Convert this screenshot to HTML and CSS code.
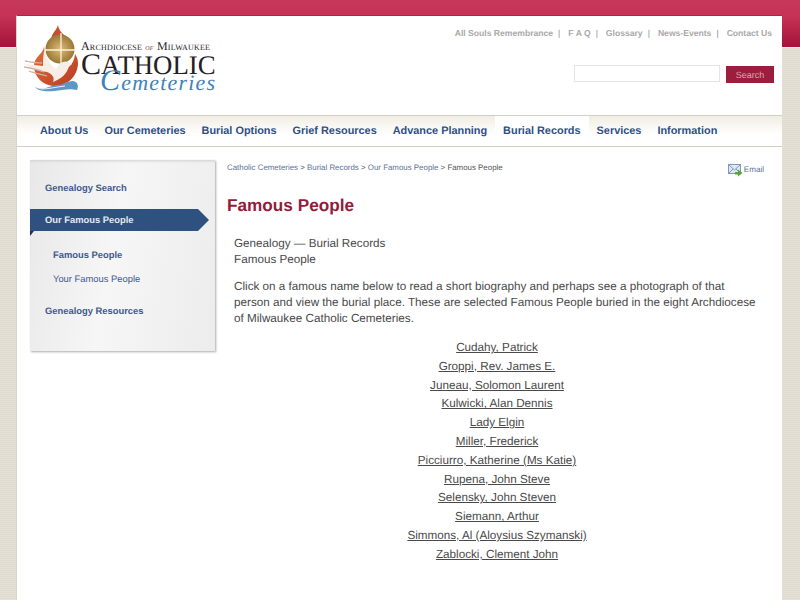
FILE: index.html
```html
<!DOCTYPE html>
<html lang="en">
<head>
<meta charset="utf-8">
<title>Famous People</title>
<link rel="stylesheet" href="styles.css">
</head>
<body>
<div class="band"></div>
<div class="page">
  <header class="header">
    <a class="logo" href="#">
      <svg class="mark" width="58" height="70" viewBox="0 0 58 70">
        <defs>
          <radialGradient id="sun" cx="50%" cy="50%" r="55%"><stop offset="0" stop-color="#dcbb78"/><stop offset="1" stop-color="#94702f"/></radialGradient>
          <linearGradient id="fl" x1="0" y1="0" x2="1" y2="1"><stop offset="0" stop-color="#e0703a"/><stop offset="1" stop-color="#b93a22"/></linearGradient>
        </defs>
        <path d="M35 1C36 8 41 10 45 15L29 18C26 11 33 8 35 1Z" fill="#c2502f"/>
        <path d="M21 22C21 30 11 32 11 42C11 54 21 61 30 62C44 63 55 52 55 39C55 36 54 33 52 30C51 42 42 48 34 46C26 44 22 32 21 22Z" fill="url(#fl)"/>
        <circle cx="37" cy="25" r="14.500" fill="url(#sun)"/>
        <path d="M38 9V41M22 26H53" stroke="#fbf3dd" stroke-width="1.300"/>
        <path d="M22 24C23 34 27 42 33 45C36 39 41 36 45 38L49 40L46 42C44 50 38 55 30 58C32 53 29 50 24 48C16 47 8 44 1 40C8 41 14 41 20 42C20 36 20 30 22 24Z" fill="#f8eee7"/>
        <path d="M2 37C8 38 13 39 19 39M1 43C8 44 14 45 21 48M6 47C11 49 17 50 24 52" stroke="#cfb3a5" stroke-width="1.300" fill="none"/>
        <path d="M12 63C20 68 27 61 34 61C40 61 43 57 50 57C55 58 56 62 54 66C47 64 39 66 31 67C23 68 15 67 12 63Z" fill="#5d97c4"/>
        <path d="M18 65C26 65 33 63 42 62" stroke="#eaf3f8" stroke-width="1" fill="none"/>
      </svg>
      <div class="logo-text">
        <div class="logo-top">Archdiocese <i>of</i> Milwaukee</div>
        <div class="logo-main"><span class="cap">C</span>ATHOLIC</div>
        <div class="logo-script"><span class="script-cap">C</span>emeteries</div>
      </div>
    </a>
    <div class="tools">
      <nav class="utility">
        <a href="#">All Souls Remembrance</a><span>|</span>
        <a href="#">F A Q</a><span>|</span>
        <a href="#">Glossary</a><span>|</span>
        <a href="#">News-Events</a><span>|</span>
        <a href="#">Contact Us</a>
      </nav>
      <form class="search">
        <input class="search-input" type="text" aria-label="Search">
        <button class="search-btn" type="button">Search</button>
      </form>
    </div>
  </header>
  <nav class="mainnav">
    <a href="#">About Us</a>
    <a href="#">Our Cemeteries</a>
    <a href="#">Burial Options</a>
    <a href="#">Grief Resources</a>
    <a href="#">Advance Planning</a>
    <a class="current" href="#">Burial Records</a>
    <a href="#">Services</a>
    <a href="#">Information</a>
  </nav>
  <div class="body">
    <aside class="side">
      <a class="side-item" href="#">Genealogy Search</a>
      <a class="side-active" href="#">Our Famous People</a>
      <a class="side-sub strong" href="#">Famous People</a>
      <a class="side-sub" href="#">Your Famous People</a>
      <a class="side-item last" href="#">Genealogy Resources</a>
    </aside>
    <main class="main">
      <div class="topline">
        <div class="crumbs"><a href="#">Catholic Cemeteries</a> &gt; <a href="#">Burial Records</a> &gt; <a href="#">Our Famous People</a> &gt; Famous People</div>
        <a class="email" href="#">
          <svg width="15" height="13" viewBox="0 0 15 13"><rect x="0.500" y="0.500" width="12" height="9" fill="#dfe8f2" stroke="#7f9ab8"/><path d="M1 1L6.500 6L12 1M1 9L5 5M12 9L8 5" stroke="#7f9ab8" fill="none"/><path d="M7 8H10V5.500L14.500 9L10 12.500V10.500H7Z" fill="#5da53a"/></svg>
          <span>Email</span>
        </a>
      </div>
      <h1 class="title">Famous People</h1>
      <div class="copy">
        <p class="lead">Genealogy — Burial Records<br>Famous People</p>
        <p>Click on a famous name below to read a short biography and perhaps see a photograph of that person and view the burial place. These are selected Famous People buried in the eight Archdiocese of Milwaukee Catholic Cemeteries.</p>
        <ul class="names">
          <li><a href="#">Cudahy, Patrick</a></li>
          <li><a href="#">Groppi, Rev. James E.</a></li>
          <li><a href="#">Juneau, Solomon Laurent</a></li>
          <li><a href="#">Kulwicki, Alan Dennis</a></li>
          <li><a href="#">Lady Elgin</a></li>
          <li><a href="#">Miller, Frederick</a></li>
          <li><a href="#">Picciurro, Katherine (Ms Katie)</a></li>
          <li><a href="#">Rupena, John Steve</a></li>
          <li><a href="#">Selensky, John Steven</a></li>
          <li><a href="#">Siemann, Arthur</a></li>
          <li><a href="#">Simmons, Al (Aloysius Szymanski)</a></li>
          <li><a href="#">Zablocki, Clement John</a></li>
        </ul>
      </div>
    </main>
  </div>
</div>
</body>
</html>
```
FILE: styles.css
```css
* { box-sizing: border-box; }
html, body { margin: 0; height: 100%; overflow: hidden; }
body {
  position: relative;
  background: repeating-linear-gradient(0deg, #e5e0d6 0 1px, #e1dcd1 1px 2px);
  font-family: "Liberation Sans", Arial, sans-serif;
  color: #4a4a4a;
  text-rendering: geometricPrecision;
}
a { color: inherit; text-decoration: none; }
.band {
  position: absolute;
  top: 0; left: 0; right: 0;
  height: 48px;
  background: linear-gradient(#c7385b 0, #c43355 16px, #a5123a 47px);
  border-bottom: 1px solid #f1ece4;
}
.page {
  position: relative;
  width: 766px;
  height: 585px;
  margin: 15px 0 0 16px;
  background: #fff;
  border-top: 1px solid #b8203f;
  border-left: 1px solid #d9d4ca;
}
.header {
  display: flex;
  justify-content: space-between;
  height: 99px;
}
.logo { display: flex; padding: 8px 0 0 6px; }
.mark { flex: none; }
.logo-text { position: relative; width: 140px; padding-top: 17px; font-family: "Liberation Serif", serif; color: #26211f; }
.logo-top { font-size: 12px; font-variant: small-caps; white-space: nowrap; line-height: 11px; letter-spacing: 0.200px; }
.logo-top i { font-size: 9px; color: #7a3b34; }
.logo-main { font-size: 26.800px; line-height: 24px; white-space: nowrap; }
.cap { font-size: 30px; line-height: 24px; }
.logo-script { position: absolute; left: 19px; top: 47px; font-size: 22px; line-height: 24px; font-style: italic; color: #3f82b8; white-space: nowrap; letter-spacing: 1.200px; }
.script-cap { font-size: 30px; line-height: 20px; }
.tools { display: flex; flex-direction: column; align-items: flex-end; padding: 11px 8px 0 0; }
.utility { display: flex; font-size: 8.600px; font-weight: bold; color: #a9a9a9; line-height: 12px; padding-right: 2px; white-space: nowrap; }
.utility span { margin: 0 8px 0 5px; font-weight: normal; color: #8a8a8a; }
.search { display: flex; gap: 6px; margin-top: 26px; }
.search-input { width: 146px; height: 17px; border: 1px solid #e4e4e4; background: #fff; padding: 0; }
.search-btn { width: 48px; height: 17px; margin-top: 1px; border: 0; padding: 0; background: #9c1d3d; color: #d9a9b5; font: 9px "Liberation Sans", Arial, sans-serif; text-rendering: geometricPrecision; }
.mainnav {
  display: flex;
  height: 32px;
  padding-left: 15px;
  border-top: 1px solid #d2cec6;
  border-bottom: 1px solid #d2cec6;
  background: linear-gradient(#f1ede4, #fff 18px);
  font-size: 10.900px;
  font-weight: bold;
  color: #2d4f86;
  white-space: nowrap;
}
.mainnav a { padding: 0 8px; line-height: 31px; }
.mainnav .current { background: #fff; }
.body { display: flex; padding-top: 13px; }
.side {
  flex: none;
  display: flex;
  flex-direction: column;
  width: 185px;
  height: 191px;
  margin-left: 13px;
  padding-top: 22px;
  background: linear-gradient(100deg, #e8e8e8, #f6f6f6 45%, #ececec);
  box-shadow: 1px 1px 2px #aaa, inset 0 3px 3px -2px #d0d0d0;
  font-size: 9.400px;
  font-weight: bold;
  color: #3d5a8c;
}
.side-item { padding-left: 15px; line-height: 12px; }
.side-item.last { margin-top: 20px; }
.side-active {
  position: relative;
  width: 168px;
  height: 22px;
  margin-top: 15px;
  padding-left: 15px;
  line-height: 22px;
  color: #e4e8ef;
  background: #2f5180;
}
.side-active::before {
  content: "";
  position: absolute;
  left: 100%;
  top: 0;
  border-left: 11px solid #2f5180;
  border-top: 11px solid transparent;
  border-bottom: 11px solid transparent;
}
.side-active::after {
  content: "";
  position: absolute;
  left: 0;
  top: 100%;
  border-top: 5px solid #1d3357;
  border-left: 4px solid transparent;
  transform: scaleX(-1);
}
.side-sub { padding-left: 23px; line-height: 12px; margin-top: 12px; font-weight: normal; }
.side-active + .side-sub { margin-top: 18px; }
.side-sub.strong { font-weight: bold; }
.main { flex: 1; min-width: 0; padding: 0 18px 0 12px; }
.topline { display: flex; justify-content: space-between; padding-top: 2px; height: 20px; }
.crumbs { font-size: 7.900px; line-height: 12px; color: #555; }
.crumbs a { color: #5b7399; }
.email { display: flex; align-items: flex-start; gap: 1px; font-size: 8.100px; line-height: 12px; color: #5b7399; padding: 2px 0 0; }
.title { margin: 13px 0 0; font-size: 17.200px; line-height: 24px; font-weight: bold; color: #931c3c; }
.copy { padding-left: 7px; font-size: 11.700px; line-height: 16px; color: #4a4a4a; }
.copy p { max-width: 526px; margin: 11px 0 0; }
.copy .lead { margin-top: 19px; }
.names { list-style: none; margin: 12px 0 0; padding: 0 4px 0 0; text-align: center; line-height: 18.800px; }
.names a { text-decoration: underline; }
```
